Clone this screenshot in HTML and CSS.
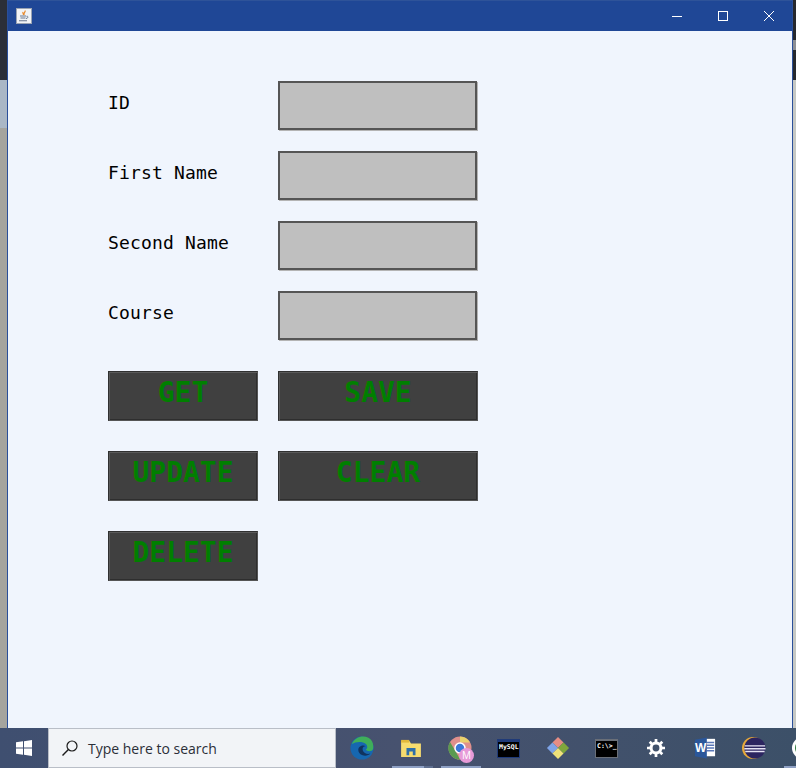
FILE: index.html
```html
<!DOCTYPE html>
<html lang="en">
<head>
  <meta charset="utf-8" />
  <title>Student Form</title>
  <link rel="stylesheet" href="styles.css">
</head>
<body>
  <div class="desktop">
    <div class="edge edge-left">
      <span class="edge-dark"></span>
      <span class="edge-light"></span>
      <span class="edge-grey"></span>
    </div>

    <div class="window">
      <header class="titlebar">
        <svg class="app-icon" width="16" height="16" viewBox="0 0 16 16">
          <rect x="0.5" y="0.5" width="15" height="15" fill="#f1f3f6" stroke="#9aa3b2" />
          <path d="M9 2.500c1 1.500-2 2.500-.8 4.500M7 4c-.5 1 .3 1.500.5 2.800" fill="none" stroke="#e98a2c" stroke-width="1.200" />
          <path d="M4 8h6M4.500 10h5M3 12.800h8" stroke="#6a7890" stroke-width="1.100" />
          <path d="M10.500 8.300c2-.5 2 2-.5 2.200" fill="none" stroke="#6a7890" />
        </svg>
        <div class="win-controls">
          <svg width="12" height="12" viewBox="0 0 12 12"><path d="M1 6.500h10" stroke="#fff" /></svg>
          <svg width="12" height="12" viewBox="0 0 12 12"><rect x="1.500" y="1.500" width="9" height="9" fill="none" stroke="#fff" /></svg>
          <svg width="12" height="12" viewBox="0 0 12 12"><path d="M1 1l10 10M11 1L1 11" stroke="#fff" /></svg>
        </div>
      </header>

      <main class="form">
        <div class="field-row">
          <label class="field-label">ID</label>
          <div class="field-box"></div>
        </div>
        <div class="field-row">
          <label class="field-label">First Name</label>
          <div class="field-box"></div>
        </div>
        <div class="field-row">
          <label class="field-label">Second Name</label>
          <div class="field-box"></div>
        </div>
        <div class="field-row">
          <label class="field-label">Course</label>
          <div class="field-box"></div>
        </div>

        <div class="button-grid">
          <button class="action">GET</button>
          <button class="action">SAVE</button>
          <button class="action">UPDATE</button>
          <button class="action">CLEAR</button>
          <button class="action">DELETE</button>
        </div>
      </main>
    </div>

    <div class="edge edge-right">
      <span class="edge-top"></span>
      <span class="edge-mark"></span>
      <span class="edge-top edge-short"></span>
      <span class="edge-bottom"></span>
    </div>
  </div>

  <footer class="taskbar">
    <div class="start">
      <svg width="16" height="16" viewBox="0 0 16 16">
        <path d="M0 2.300l7-1v6.300H0zM8 1.200l8-1.200v7.600H8zM0 8.500h7v6.300l-7-1zM8 8.500h8V16l-8-1.200z" fill="#fff" />
      </svg>
    </div>

    <div class="search">
      <svg width="18" height="18" viewBox="0 0 18 18">
        <circle cx="11" cy="7" r="5" fill="none" stroke="#1b1b1b" stroke-width="1.200" />
        <path d="M7.400 10.600L1.500 16.500" stroke="#1b1b1b" stroke-width="1.400" />
      </svg>
      <span>Type here to search</span>
    </div>

    <div class="tray">
      <div class="tray-item">
        <svg width="24" height="24" viewBox="0 0 26 26">
          <circle cx="13" cy="13" r="12.500" fill="#1667b0" />
          <path d="M2 9C5 1 14-1 20 2c4 2 6 7 5 12-1 3-6 3-8 1 3-2 2-7-3-8C9 6 5 7 2 9z" fill="#3fae5a" />
          <path d="M9 15c0-4 5-6 8-4-3 0-4 2-3 5 1 3 5 4 8 3-3 4-13 3-13-4z" fill="#10335f" />
        </svg>
      </div>
      <div class="tray-item active folder">
        <svg width="22" height="18" viewBox="0 0 24 20">
          <path d="M1 2h9l2 3h11v15H1z" fill="#f7dc6f" />
          <path d="M1 1h9v3H1z" fill="#e3b93b" />
          <path d="M7 10h10v8h-3v-4h-4v4H7z" fill="#2f6fa8" />
        </svg>
      </div>
      <div class="tray-item active">
        <svg width="24" height="24" viewBox="0 0 24 24">
          <circle cx="12" cy="12" r="11.500" fill="#e0908c" />
          <path d="M12 .5a11.500 11.500 0 0 1 10 6H12z" fill="#e9d26c" />
          <path d="M2 6l6 10 4 7.500A11.500 11.500 0 0 1 2 6z" fill="#5a9a50" />
          <circle cx="12" cy="12" r="5" fill="#3b78d8" stroke="#fff" stroke-width="1.500" />
        </svg>
        <span class="avatar">M</span>
      </div>
      <div class="tray-item">
        <span class="console console-blue">MySQL</span>
      </div>
      <div class="tray-item">
        <svg width="24" height="24" viewBox="0 0 26 26">
          <path d="M13 1l6 6-6 6-6-6z" fill="#e58d84" />
          <path d="M7 7l6 6-6 6-6-6z" fill="#7ea4e8" />
          <path d="M19 7l6 6-6 6-6-6z" fill="#7fa63c" />
          <path d="M13 13l6 6-6 6-6-6z" fill="#efe27a" />
        </svg>
      </div>
      <div class="tray-item">
        <span class="console console-grey">C:\&gt;_</span>
      </div>
      <div class="tray-item">
        <svg width="18" height="18" viewBox="0 0 20 20">
          <circle cx="10" cy="10" r="5.500" fill="none" stroke="#fff" stroke-width="3.400" />
          <path d="M10 0v4M10 16v4M0 10h4M16 10h4M3 3l2.800 2.800M14.200 14.200L17 17M17 3l-2.800 2.800M5.800 14.200L3 17" stroke="#fff" stroke-width="3" />
        </svg>
      </div>
      <div class="tray-item">
        <svg width="22" height="22" viewBox="0 0 24 24">
          <path d="M11 2h12v19H11z" fill="#fff" />
          <path d="M14 6h8M14 9h8M14 12h8M14 15h8" stroke="#5a78b8" stroke-width="1.500" />
          <path d="M1 3l13-2.500v23L1 21z" fill="#2b579a" />
        </svg>
        <span class="word-letter">W</span>
      </div>
      <div class="tray-item">
        <svg width="24" height="24" viewBox="0 0 26 26">
          <circle cx="12" cy="13" r="12" fill="#e7a93a" />
          <circle cx="14" cy="13" r="11.500" fill="#2c2560" />
          <path d="M3 10h22v1.500H3zM2.500 13h23v1.500h-23zM3.500 16h21v1.500h-21z" fill="#e6e4f4" />
        </svg>
      </div>
      <div class="tray-item active cut">
        <svg width="24" height="24" viewBox="0 0 24 24">
          <circle cx="12" cy="12" r="11" fill="#fff" />
          <circle cx="12" cy="12" r="8" fill="#2f7d3e" />
        </svg>
      </div>
    </div>
  </footer>
</body>
</html>
```

FILE: styles.css
```css
/* Reset + Base */
html, body {
  margin: 0;
  height: 100%;
  overflow: hidden;
}

body {
  display: flex;
  flex-direction: column;
  background-color: #3f5170;
  font-family: "DejaVu Sans Mono", monospace;
}

.desktop {
  display: flex;
  height: 728px;
}

/* Bits of what sits behind the window */
.edge {
  display: flex;
  flex-direction: column;
}

.edge-left {
  width: 7px;
}

.edge-dark {
  height: 80px;
  background-color: #2b2f38;
}

.edge-light {
  height: 48px;
  background-color: #aab7c6;
}

.edge-grey {
  flex-grow: 1;
  background-color: #a5a49e;
}

.edge-right {
  width: 3px;
}

.edge-top {
  height: 40px;
  background-color: #26282d;
}

.edge-short {
  height: 30px;
}

.edge-mark {
  height: 10px;
  background-color: #8d8f94;
}

.edge-bottom {
  flex-grow: 1;
  background-color: #c6c8c4;
}

/* Window */
.window {
  width: 786px;
  display: flex;
  flex-direction: column;
  box-sizing: border-box;
  border-left: 1px solid #2a4f9a;
  border-right: 1px solid #2a4f9a;
  background-color: #f0f5fd;
}

.titlebar {
  height: 31px;
  flex-shrink: 0;
  display: flex;
  align-items: center;
  justify-content: space-between;
  padding-left: 8px;
  background-color: #1f4796;
  box-sizing: border-box;
  border-top: 1px solid #2e5399;
}

.win-controls {
  display: flex;
  gap: 34px;
  padding-right: 17px;
}

/* Form */
.form {
  padding: 50px 0 0 100px;
}

.field-row {
  display: flex;
  height: 50px;
  margin-bottom: 20px;
}

.field-label {
  width: 170px;
  padding-top: 12px;
  font-size: 18px;
  letter-spacing: 0.17px;
  line-height: 20px;
  color: #000;
}

.field-box {
  width: 199px;
  height: 49px;
  box-sizing: border-box;
  background-color: #bfbfbf;
  border: 2px solid #555;
  box-shadow: 1px 1px 0 #b4b4b4;
}

.button-grid {
  display: grid;
  grid-template-columns: 150px 200px;
  grid-auto-rows: 50px;
  column-gap: 20px;
  row-gap: 30px;
  margin-top: 30px;
}

.action {
  display: flex;
  justify-content: center;
  padding: 7px 0 0;
  box-sizing: border-box;
  background-color: #404040;
  border: 1px solid #303030;
  border-bottom-color: #555;
  border-right-color: #555;
  box-shadow: inset 1px 1px 0 #5a5a5a, inset -1px -1px 0 #2e2e2e;
  color: #007f00;
  font-family: "DejaVu Sans Mono", monospace;
  font-weight: bold;
  font-size: 28px;
  line-height: 28px;
}

/* Taskbar */
.taskbar {
  height: 40px;
  display: flex;
  background: linear-gradient(90deg, #3f4f70, #47526f 50%, #3c5068);
}

.start {
  width: 48px;
  flex-shrink: 0;
  display: flex;
  align-items: center;
  justify-content: center;
}

.search {
  width: 288px;
  flex-shrink: 0;
  display: flex;
  align-items: center;
  gap: 9px;
  padding-left: 12px;
  box-sizing: border-box;
  background-color: #f2f4f7;
  border: 1px solid #b9bec7;
  font-family: "Open Sans", sans-serif;
  font-size: 14px;
  color: #2b2f38;
}

.tray {
  display: flex;
  flex-shrink: 0;
  padding-left: 1px;
}

.tray-item {
  width: 49px;
  height: 40px;
  position: relative;
  display: flex;
  align-items: center;
  justify-content: center;
  flex-shrink: 0;
}

/* Running-app underline */
.tray-item.active::after {
  content: "";
  position: absolute;
  left: 6px;
  right: 3px;
  bottom: 0;
  height: 2px;
  background-color: #8ea0c4;
}

.tray-item.folder::after {
  right: 2px;
  background: linear-gradient(90deg, #8ea0c4 78%, #5f6f90 78%);
}

/* Overlaps the browser icon */
.avatar {
  position: absolute;
  left: 24px;
  top: 20px;
  width: 15px;
  height: 15px;
  border-radius: 50%;
  background-color: #e79ad8;
  color: #fff;
  font-family: "Open Sans", sans-serif;
  font-size: 10px;
  line-height: 15px;
  text-align: center;
}

.word-letter {
  position: absolute;
  left: 15px;
  top: 13px;
  color: #fff;
  font-family: "Liberation Sans", sans-serif;
  font-size: 12px;
  font-weight: bold;
}

.console {
  width: 23px;
  height: 19px;
  box-sizing: border-box;
  display: block;
  background-color: #000;
  overflow: hidden;
  white-space: nowrap;
  color: #fff;
  font-family: "DejaVu Sans Mono", monospace;
  font-size: 6.500px;
  font-weight: bold;
  line-height: 8px;
  padding-left: 1px;
}

.console-blue {
  border: 1px solid #1f3a78;
  border-top-width: 3px;
  padding-top: 1px;
}

.console-grey {
  border: 1px solid #6a6f78;
  border-top-width: 2px;
  padding-top: 1px;
}
```
